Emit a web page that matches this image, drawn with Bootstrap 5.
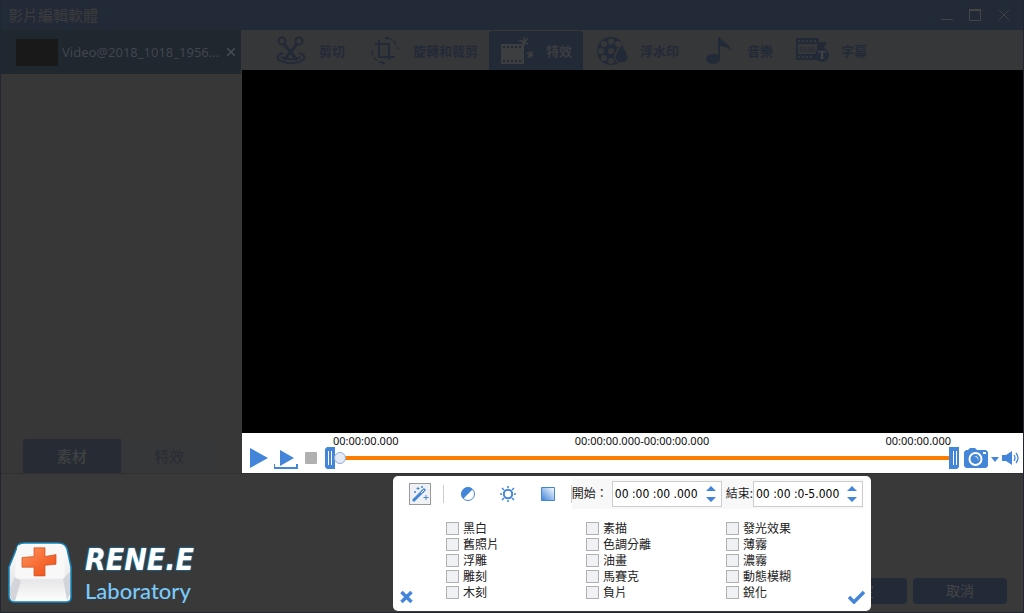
<!DOCTYPE html>
<html lang="zh-Hant">
<head>
<meta charset="utf-8">
<meta name="viewport" content="width=device-width, initial-scale=1">
<title>影片編輯軟體</title>
<link href="https://cdn.jsdelivr.net/npm/bootstrap@5.3.0/dist/css/bootstrap.min.css" rel="stylesheet">
<style>
:root{--navy:#232a37;--gray:#373737;--ink:#3c3c3c;--blue:#4285d9}
body{font:12px/16px "Noto Sans","Noto Sans CJK TC",sans-serif;background:var(--gray);color:#222}
button{border:0;padding:0;background:none;color:inherit}
svg{display:block;flex:none}
.editor{border:solid #202733;border-width:0 1px 1px}
.titlebar{height:30px;background:var(--navy);color:var(--ink);padding:0 12px 0 7px}
.titlebar h1{font-size:15px;line-height:30px}
.work{min-height:0}
.side{width:240px}
.clip{height:44px;background:#1f272f;color:#41464b;padding:0 6px 0 15px;font-size:13px}
.thumb{width:42px;height:27px;background:#191919}
.side-tabs{padding:0 23px 0 22px}
.side-tabs button{height:34px;flex:1;font-size:15px;font-weight:500;color:#292e35;background:#363738;border-radius:0 4px 0 0}
.side-tabs .on{background:#272c34;color:#404243;border-radius:4px 0 0 0}
.tools{height:40px;background:#363738;padding-left:21px}
.tool{padding:0 11px;gap:10px;font-size:13px;font-weight:700;color:var(--navy);height:39px}
.tool.on{background:var(--navy);color:#3b3d40;border-radius:3px 3px 0 0}
.screen{background:#000}
.screen,.player{margin-left:1px}
.player{height:40px;background:#fff;padding:0 3px 0 8px;color:var(--blue)}
.ctl{height:30px;display:flex;align-items:center}
.times{font-size:11px;line-height:12px;padding:0 8px;color:#111}
.track{height:22px;margin-bottom:4px}
.seek{appearance:none;flex:1;min-width:0;height:22px;margin:0 -1px;background:linear-gradient(#fa7d00,#fa7d00) center/100% 4px no-repeat}
.seek::-webkit-slider-thumb{appearance:none;width:12px;height:12px;border-radius:50%;background:#e6ebf3;border:1px solid #8fb0de}
.foot{height:139px;background:#393939;border-top:1px solid #303030;padding:0 16px 8px 6px}
.foot .act{width:94px;height:26px;border-radius:4px;background:var(--navy);color:#444;font-size:14px}
.act + .act{margin-left:6px}
.brand-top{font:italic 700 30px/36px "DejaVu Sans Condensed","DejaVu Sans",sans-serif;color:#fff;text-shadow:0 0 2px #1583b8,0 0 2px #1583b8}
.brand-sub{font:500 22px/26px Lato,sans-serif;color:#78cbfa}
.panel{position:absolute;right:152px;bottom:1px;width:478px;height:135px;background:#fff;border-radius:5px}
.panel-tools{padding:3px 8px 0 16px;color:var(--blue)}
.wand{width:22px;height:22px;border:1px solid #999;background:#f0f1f4;display:grid;place-items:center}
.rule{width:1px;height:18px;background:#ccc}
.wand + .rule{margin:0 16px 0 12px}
.timing{background:#f8f8f8;color:#222;height:30px}
.spin{width:110px;height:26px;border:1px solid #ccc;background:#fff}
.spin input{border:0;padding:0 0 0 2px;width:92px;min-width:0;font:12px/24px "DejaVu Sans Condensed","DejaVu Sans",sans-serif;color:#000;background:none}
.fx{display:grid;grid-template-columns:repeat(3,1fr);padding:11px 5px 0 53px}
.fx label{display:flex;align-items:center;gap:4px;height:16px}
.fx span{padding-top:2px}
.fx input{appearance:none;width:13px;height:13px;margin:0;border:1px solid #b0b0b0;background:#f0f1f4}
.fx input:checked{background:var(--blue)}
.panel-end{color:var(--blue);padding:0 6px 7px 7px}
</style>
</head>
<body>
<div class="editor d-flex flex-column vh-100 position-relative overflow-hidden">
<header class="titlebar d-flex align-items-center justify-content-between">
  <h1 class="m-0 fw-normal">影片編輯軟體</h1>
  <div class="d-flex gap-3">
    <button aria-label="最小化"><svg width="13" height="13" fill="none" stroke="#454545"><path d="M1 10.5h12"/></svg></button>
    <button aria-label="最大化"><svg width="13" height="13" fill="none" stroke="#454545"><path d="M.5 1v10.500h11V1"/><path d="M0 1h12" stroke-width="2"/></svg></button>
    <button aria-label="關閉"><svg width="13" height="13" fill="none" stroke="#414141"><path d="m1 1 10 10M11 1 1 11"/></svg></button>
  </div>
</header>
<div class="work d-flex flex-fill">
  <aside class="side d-flex flex-column flex-shrink-0">
    <div class="clip d-flex align-items-center">
      <div class="thumb"></div><span class="ms-1 me-auto">Video@2018_1018_1956...</span>
      <button aria-label="移除"><svg width="8" height="8" stroke="#444b50" stroke-width="1.6"><path d="m0 0 8 8M8 0 0 8"/></svg></button>
    </div>
    <div class="side-tabs d-flex mt-auto"><button class="on">素材</button><button>特效</button></div>
  </aside>
  <main class="d-flex flex-column flex-fill">
    <nav class="tools d-flex align-items-end">
      <button class="tool d-flex align-items-center"><svg width="36" height="32" fill="none" stroke="#232a37" stroke-width="2"><circle cx="9" cy="6" r="3.5"/><circle cx="26" cy="6" r="3.5"/><path d="m11 9 13 16M24 9 11 25" stroke-width="3"/><path d="M10 18c-7 2-7 6-2 8 5 3 15 3 20 0 5-2 5-6-2-8M8 22c5 3 15 3 20 0"/></svg>剪切</button>
      <button class="tool d-flex align-items-center"><svg width="36" height="32" fill="none" stroke="#232a37" stroke-width="2"><path d="M9 9h13v16M12 5v17h16M8 9h2M22 25v-2" /><path d="M20 3c6 1 9 5 11 11M5 15c0 7 4 11 10 13" stroke-dasharray="5 2" stroke-width="1.4"/><path d="m17 3 4-2v4zM19 28l-4-2v4z" fill="#232a37" stroke="none"/></svg>旋轉和裁剪</button>
      <button class="tool on d-flex align-items-center"><svg width="36" height="32"><path fill="#3d3e3f" fill-rule="evenodd" d="M1 9h23v20H1zM3 11v2h2v-2zm4 0v2h2v-2zm4 0v2h2v-2zm4 0v2h2v-2zm4 0v2h2v-2zM3 25v2h2v-2zm4 0v2h2v-2zm4 0v2h2v-2zm4 0v2h2v-2zm4 0v2h2v-2z"/><path d="M24 2v9M19 5l9 4M28 3l-7 8M30 16v7M27 18l6 3M33 17l-5 5" stroke="#3d3e3f" stroke-width="1.6"/></svg>特效</button>
      <button class="tool d-flex align-items-center"><svg width="36" height="32"><circle cx="17" cy="16" r="14" fill="#232a37"/><g fill="#363738"><circle cx="17" cy="6.500" r="3"/><circle cx="10" cy="9" r="3"/><circle cx="24" cy="9" r="3"/><circle cx="7" cy="16" r="3"/><circle cx="17" cy="16" r="3"/><circle cx="10" cy="23" r="3"/><circle cx="17" cy="26" r="3"/></g><path d="M28 8c-3 5-7 9-7 14 0 8 13 8 13 0 0-5-4-9-6-14z" fill="#232a37" stroke="#363738" stroke-width="1.500"/></svg>浮水印</button>
      <button class="tool d-flex align-items-center"><svg width="36" height="32" fill="#232a37"><ellipse cx="12" cy="24" rx="7" ry="5"/><path d="M17 2h2c1 5 11 6 11 15-2-5-7-5-11-6v13h-2z"/></svg>音樂</button>
      <button class="tool d-flex align-items-center"><svg width="36" height="32"><path fill="#232a37" fill-rule="evenodd" d="M1 3h23v4h8l-3 6-5 3v9H1zM3 5v2h2V5zm4 0v2h2V5zm4 0v2h2V5zm4 0v2h2V5zm4 0v2h2V5zM3 9v10h19V9zm0 12v2h2v-2zm4 0v2h2v-2zm4 0v2h2v-2zm4 0v2h2v-2z"/><text x="4" y="17" font-family="Liberation Sans" font-size="8" font-weight="400" fill="#232a37">SUB</text><circle cx="27" cy="20" r="7" fill="#232a37"/><text x="23" y="24" font-family="Liberation Serif" font-size="12" fill="#454648">T</text></svg>字幕</button>
    </nav>
    <div class="screen flex-fill"></div>
    <div class="player d-flex align-items-end">
      <button class="ctl" aria-label="播放"><svg width="24" height="24" fill="#4285d9"><path d="m0 2 18 10L0 22z"/></svg></button>
      <button class="ctl" aria-label="播放片段"><svg width="31" height="24"><path fill="#4285d9" d="m6 4 14 8-14 8z"/><path d="M0 18v4h23v-4" fill="none" stroke="#4285d9" stroke-width="2"/></svg></button>
      <button class="ctl" aria-label="停止"><svg width="20" height="24"><rect y="6" width="12" height="12" rx="1" fill="#b0b0b0"/></svg></button>
      <div class="flex-fill">
        <div class="times d-flex justify-content-between"><span>00:00:00.000</span><span>00:00:00.000-00:00:00.000</span><span>00:00:00.000</span></div>
        <div class="track d-flex">
          <svg width="10" height="22"><path fill="#4285d9" d="M2 0h8v22H2l-2-2V2z"/><path d="M3.500 4v14M6.500 4v14" stroke="#fff"/></svg>
          <input class="seek" type="range" value="0" aria-label="播放位置">
          <svg width="10" height="22"><path fill="#4285d9" d="M0 0h10v20l-2 2H0z"/><path d="M4.500 4v14M7.500 4v14" stroke="#fff"/></svg>
        </div>
      </div>
      <button class="ctl" aria-label="截圖"><svg class="ms-1" width="25" height="24"><path fill="#4285d9" d="M1 6 3 4h2l2-2h5l2 2h9l2 2v14l-2 2H3l-2-2z"/><circle cx="12.500" cy="13" r="6" fill="none" stroke="#fff" stroke-width="2"/><path d="M11 10c4 0 5 2 4 5 0-3-1-4-4-5M20 6h3v2h-3z" fill="#fff"/></svg></button>
      <button class="ctl" aria-label="更多"><svg width="14" height="24"><path fill="#4285d9" d="M3 11h8l-4 5z"/></svg></button>
      <button class="ctl" aria-label="音量"><svg width="18" height="24"><path fill="#4285d9" d="M0 9h4l6-4v14l-6-4H0z"/><path d="M12 9q2 3 0 6M14 7q4 5 0 10" fill="none" stroke="#4285d9" stroke-width="1.300"/></svg></button>
    </div>
  </main>
</div>
<footer class="foot d-flex align-items-end flex-shrink-0">
  <div class="d-flex align-items-center me-auto">
    <svg width="66" height="62" viewBox="0 0 66 64" preserveAspectRatio="none"><defs><linearGradient id="k" x2="0" y2="1"><stop stop-color="#fff"/><stop offset=".65" stop-color="#e8e8ea"/><stop offset="1" stop-color="#fff"/></linearGradient><linearGradient id="r" x2="1" y2="1"><stop stop-color="#ff925c"/><stop offset="1" stop-color="#ef4b12"/></linearGradient></defs><path d="M11 3q2-2 6-2h34q7 0 9 6l4 19v31q0 5-5 5H8q-6 0-6-6V26z" fill="url(#k)" stroke="#1585bd" stroke-width="1.500"/><path d="M8 36 3 47v9q1 5 5 5l6-21zM56 38l4 22 3-6V31z" fill="#d3d5da"/><path d="M13 3h38q5 0 6 5l1 26q0 4-4 4H12q-4 0-4-4l2-27q0-4 3-4" fill="#f8f8f9"/><path d="M27 6h11v9l11-2v10l-11 1v11H27v-9H15V16l12-1z" fill="url(#r)" stroke="#c84f1d" stroke-width=".7"/></svg>
    <div class="ms-2 ps-1"><div class="brand-top">RENE.E</div><div class="brand-sub">Laboratory</div></div>
  </div>
  <button class="act">確定</button><button class="act">取消</button>
</footer>
<section class="panel d-flex flex-column" aria-label="特效">
  <div class="panel-tools d-flex align-items-center">
    <button class="wand" aria-label="濾鏡"><svg width="18" height="18"><path d="M2 16 12 6" stroke="#4285d9" stroke-width="3"/><path d="m11 7 3-3" stroke="#4285d9" stroke-width="3"/><path d="m10 8 3-3" stroke="#fff"/><path d="M7 2v3M5.500 3.500h3M15 10v5M12.500 12.500h5M4 6v2M3 7h2M11 1v2M10 2h2" stroke="#4285d9"/></svg></button>
    <span class="rule"></span>
    <div class="d-flex gap-4">
    <button aria-label="對比"><svg width="16" height="16"><circle cx="8" cy="8" r="6.500" fill="#fff" stroke="#4285d9"/><path d="M3.300 12.700A6.500 6.500 0 0 1 12.700 3.300z" fill="#4285d9"/></svg></button>
    <button aria-label="亮度"><svg width="16" height="16" fill="none" stroke="#4285d9"><circle cx="8" cy="8" r="4.200" stroke-width="2"/><path d="M8 0v2M8 14v2M0 8h2M14 8h2M2 2l2 2M12 12l2 2M2 14l2-2M12 4l2-2" stroke-width="1.500"/></svg></button>
    <button aria-label="漸層"><svg width="16" height="16"><defs><linearGradient id="g" x1="1" x2="0" y2="1"><stop stop-color="#fff"/><stop offset="1" stop-color="#3d82d9"/></linearGradient></defs><path d="M1.500 1.500h13v13h-13z" fill="url(#g)" stroke="#4285d9"/></svg></button>
    </div>
    <span class="rule ms-auto"></span>
    <div class="timing d-flex align-items-center">
      <label for="from" class="me-1">開始：</label>
      <div class="spin d-flex"><input id="from" type="text" value="00 :00 :00 .000"><button aria-label="調整"><svg width="12" height="24" fill="#4285d9"><path d="m1 9 5-5 5 5zM1 15h10l-5 5z"/></svg></button></div>
      <label for="to" class="ms-1">結束:</label>
      <div class="spin d-flex"><input id="to" type="text" value="00 :00 :0-5.000"><button aria-label="調整"><svg width="12" height="24" fill="#4285d9"><path d="m1 9 5-5 5 5zM1 15h10l-5 5z"/></svg></button></div>
    </div>
  </div>
  <div class="fx">
    <label><input type="checkbox"><span>黑白</span></label><label><input type="checkbox"><span>素描</span></label><label><input type="checkbox"><span>發光效果</span></label>
    <label><input type="checkbox"><span>舊照片</span></label><label><input type="checkbox"><span>色調分離</span></label><label><input type="checkbox"><span>薄霧</span></label>
    <label><input type="checkbox"><span>浮雕</span></label><label><input type="checkbox"><span>油畫</span></label><label><input type="checkbox"><span>濃霧</span></label>
    <label><input type="checkbox"><span>雕刻</span></label><label><input type="checkbox"><span>馬賽克</span></label><label><input type="checkbox"><span>動態模糊</span></label>
    <label><input type="checkbox"><span>木刻</span></label><label><input type="checkbox"><span>負片</span></label><label><input type="checkbox"><span>銳化</span></label>
  </div>
  <div class="panel-end position-absolute bottom-0 w-100 d-flex justify-content-between pe-none">
    <button class="pe-auto" aria-label="取消特效"><svg width="13" height="14" stroke="#4285d9" stroke-width="3.500"><path d="m1.500 2 10 10M11.500 2l-10 10"/></svg></button>
    <button class="pe-auto" aria-label="套用"><svg width="17" height="14" fill="none" stroke="#4285d9" stroke-width="3.500"><path d="m1 7 5 5L16 2"/></svg></button>
  </div>
</section>
</div>
<script src="https://cdn.jsdelivr.net/npm/bootstrap@5.3.0/dist/js/bootstrap.bundle.min.js"></script>
</body>
</html>
